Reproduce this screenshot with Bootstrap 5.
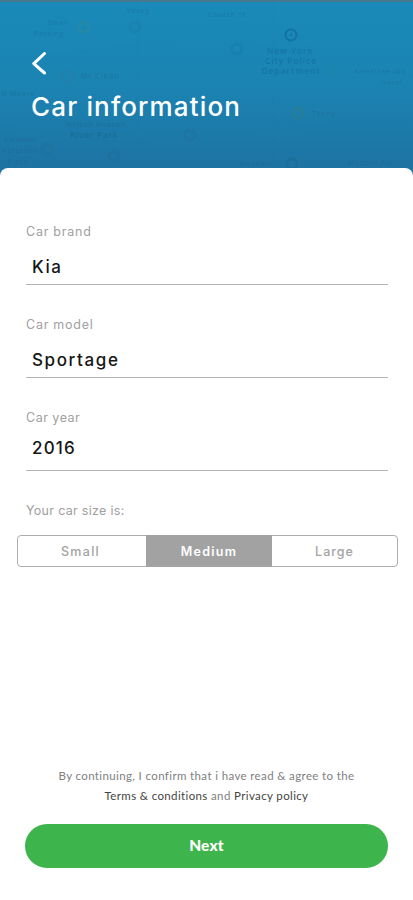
<!DOCTYPE html>
<html lang="en">
<head>
<meta charset="utf-8">
<meta name="viewport" content="width=device-width, initial-scale=1">
<title>Car information</title>
<link href="https://cdn.jsdelivr.net/npm/bootstrap@5.3.0/dist/css/bootstrap.min.css" rel="stylesheet">
<style>
body{font-family:Inter,"Open Sans",sans-serif;background:#fff}
.screen{width:413px;height:900px}
.hero{height:176px;background:linear-gradient(#198ab9,#1b83b2 50%,#1d73a2 96%);border-top:2px solid #47788e}
.map{left:0;top:-2px}
.back{margin:50px 0 0 31px;width:17px;height:26px}
.title{margin:13px 0 0 31px;font-size:26px;line-height:32px;font-weight:500;letter-spacing:1.15px}
.sheet{margin-top:-8px;padding-top:55px;border-radius:8px 8px 0 0}
.field{height:63px;margin:0 25px 30px 26px;border-bottom:1px solid #b4b4b4}
.field:first-child{height:62px}
.caption{font-size:12.5px;line-height:18px;color:#a0a0a0;letter-spacing:.75px}
.field:nth-child(n+2) .caption,.size-label{position:relative;top:1px}
.field:nth-child(3) .caption{letter-spacing:.5px}
.caption.size-label{letter-spacing:.3px}
.value{font-size:17px;line-height:24px;font-weight:500;color:#161616;letter-spacing:1.5px;margin:14px 0 0 6px}
.value.model{margin-top:15px;letter-spacing:1.6px}
.value.year{margin-top:10px;letter-spacing:1.2px}
.size-label{margin-left:26px}
.sizes{margin:16px 15px 0 17px;height:32px}
.sizes .btn{font-size:12.5px;line-height:18px;padding:2px 0 0;border:1px solid #adadad;border-radius:4px;color:#a3a3a3;font-weight:500;letter-spacing:1.3px;flex:0 0 auto}
.sizes .w-s{width:130px;padding-right:3px}.sizes .w-m{width:126px}.sizes .w-l{width:127px;letter-spacing:1px}
.sizes .btn.active{background:#a2a2a2;border-color:#a2a2a2;color:#fff;font-weight:600}
.legal{font-family:Lato,sans-serif;font-size:11.5px;line-height:20px;color:#808080;letter-spacing:.37px}
.legal a{color:#444}
.next{width:363px;height:44px;margin:18px 0 32px 25px;background:#3db44c;font-family:Lato,sans-serif;font-size:15.5px;font-weight:900;letter-spacing:.15px;border:0}
</style>
</head>
<body>
<main class="screen d-flex flex-column overflow-hidden">
<header class="hero position-relative flex-shrink-0 text-white">
<svg class="map position-absolute" width="413" height="175" viewBox="0 0 413 175" aria-hidden="true">
<g fill="none" stroke="#28799b" stroke-opacity=".06">
<path d="M0 62L210 36L413 76M138 0V175M273 0V175M0 126L120 142L413 119"/>
</g>
<g fill="none" stroke-width="3" stroke-opacity=".15">
<circle cx="84" cy="27" r="5" stroke="#3b8984" stroke-opacity=".32"/><circle cx="135" cy="27" r="5" stroke="#17648f"/>
<circle cx="67" cy="76" r="5" stroke="#456f8d"/><circle cx="237" cy="49" r="5" stroke="#1461a0"/>
<circle cx="291" cy="35" r="5.5" stroke="#07518b" stroke-width="2" stroke-opacity=".38"/><circle cx="333" cy="71" r="4" stroke="#31848d"/>
<circle cx="298" cy="113" r="5" stroke="#3d8070" stroke-opacity=".32"/><circle cx="190" cy="135" r="5" stroke="#345490"/>
<circle cx="47" cy="149" r="5" stroke="#315f7d"/><circle cx="114" cy="156" r="5" stroke="#315f7d"/>
<circle cx="292" cy="164" r="5" stroke="#1a5275"/>
</g>
<circle cx="291" cy="35" r="1.2" fill="#07518b" fill-opacity=".35"/>
<g fill="#164e77" fill-opacity=".22" font-family="Open Sans, sans-serif" font-size="7" font-weight="600" text-anchor="middle" letter-spacing=".6">
<text x="58" y="25">Small</text><text x="49" y="36">Parking</text><text x="138" y="13">Vesey</text>
<text x="227" y="17">Church St</text><text x="100" y="79" font-size="8">Mr Clean</text><text x="18" y="96">N Moore</text>
<text x="96" y="127" fill-opacity=".26">Nelson Hudson</text><text x="94" y="138" font-size="8.5" fill-opacity=".32">River Park</text>
<text x="20" y="142">Vietnam</text><text x="20" y="153">Veterans</text><text x="18" y="164">Plaza</text>
<text x="380" y="74">American Inn</text><text x="392" y="85">Hotel</text><text x="324" y="116">Tenny</text>
<text x="256" y="166">Museum</text><text x="370" y="165">Modern Art</text>
<g fill="#07518b" fill-opacity=".34" font-size="8.5" letter-spacing=".9"><text x="290" y="54">New York</text><text x="291" y="64">City Police</text><text x="291" y="74">Department</text></g>
</g>
</svg>
<div class="position-relative d-flex flex-column">
<svg class="back" viewBox="0 0 17 26" fill="none" stroke="#fff" stroke-width="3" stroke-linecap="round" stroke-linejoin="round" role="img" aria-label="Back"><path d="M13.5 1.5L2.8 11.6L13.5 21"/></svg>
<h1 class="title">Car information</h1>
</div>
</header>
<section class="sheet bg-white position-relative flex-grow-1 d-flex flex-column">
<div class="field"><div class="caption">Car brand</div><div class="value">Kia</div></div>
<div class="field"><div class="caption">Car model</div><div class="value model">Sportage</div></div>
<div class="field"><div class="caption">Car year</div><div class="value year">2016</div></div>
<div class="caption size-label">Your car size is:</div>
<div class="btn-group sizes" role="group" aria-label="Car size">
<button type="button" class="btn w-s">Small</button>
<button type="button" class="btn w-m active">Medium</button>
<button type="button" class="btn w-l">Large</button>
</div>
<div class="legal mt-auto text-center"><div>By continuing, I confirm that i have read &amp; agree to the</div><div><a class="text-decoration-none" href="#">Terms &amp; conditions</a> and <a class="text-decoration-none" href="#">Privacy policy</a></div></div>
<button type="button" class="btn btn-success rounded-pill next">Next</button>
</section>
</main>
<script src="https://cdn.jsdelivr.net/npm/bootstrap@5.3.0/dist/js/bootstrap.bundle.min.js"></script>
</body>
</html>
